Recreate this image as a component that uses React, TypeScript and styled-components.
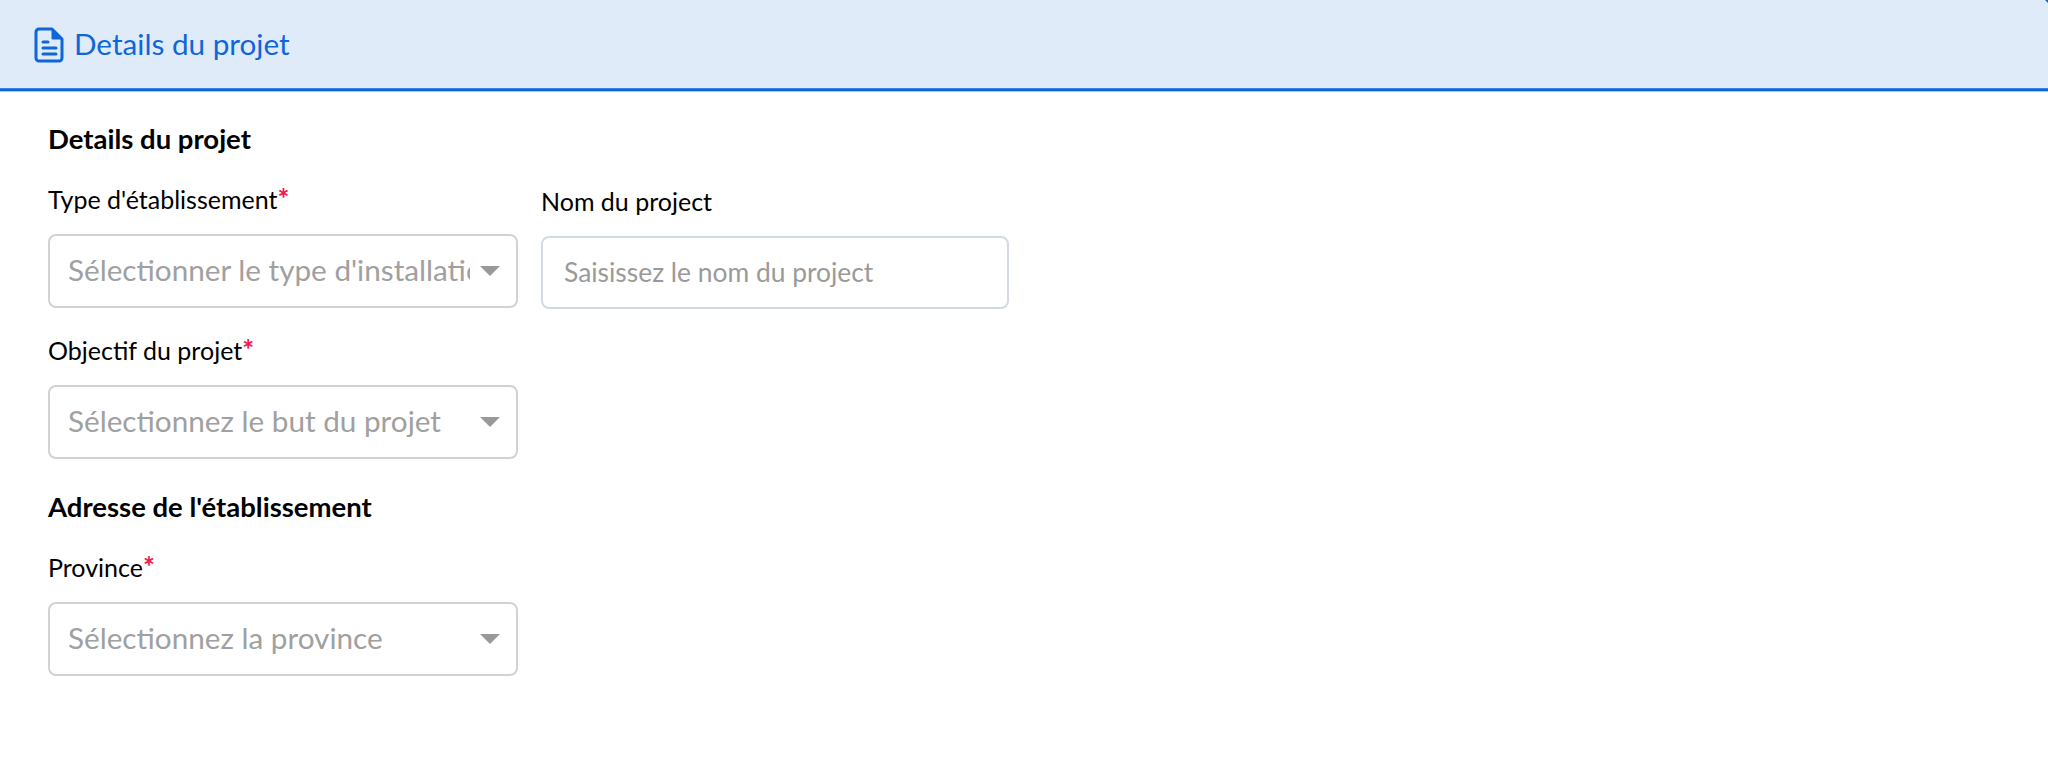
import React from "react";
import styled, { createGlobalStyle } from "styled-components";

const GlobalStyle = createGlobalStyle`
  html, body {
    margin: 0;
    padding: 0;
    background: #ffffff;
    font-family: "Lato", "Noto Sans", sans-serif;
    color: #000000;
  }
`;

const Page = styled.div`
  width: 2048px;
  height: 759px;
  overflow: hidden;
`;

const Header = styled.header`
  position: relative;
  display: flex;
  align-items: center;
  gap: 10px;
  height: 89px;
  padding-left: 34px;
  background: #dfebf8;
  border-bottom: 2px solid #0f66d8;
  box-shadow: inset 0 -1px 0 #3a85e4, 0 1px 0 #a9c9f0;
  color: #0f66d8;
`;

const HeaderTitle = styled.h1`
  margin: 0 0 3px;
  font-size: 29.7px;
  font-weight: 400;
`;

const Corner = styled.span`
  position: absolute;
  top: 0;
  right: 0;
  width: 0;
  height: 0;
  border-top: 3px solid #0f66d8;
  border-left: 3px solid transparent;
`;

const Body = styled.main`
  display: flex;
  flex-direction: column;
  align-items: flex-start;
  padding: 33px 48px 0;
`;

const SectionTitle = styled.h2<{ $top?: number }>`
  margin: ${(p) => p.$top ?? 0}px 0 0;
  font-size: 27.5px;
  line-height: 30px;
  font-weight: 700;
`;

const Row = styled.div<{ $top: number }>`
  display: flex;
  gap: 23px;
  margin-top: ${(p) => p.$top}px;
`;

const Field = styled.div<{ $offset?: number }>`
  display: flex;
  flex-direction: column;
  gap: 21px;
  width: ${(p) => (p.$offset ? 468 : 470)}px;
  padding-top: ${(p) => p.$offset ?? 0}px;
`;

const Label = styled.label`
  font-size: 25px;
  line-height: 28px;
`;

const Required = styled.span`
  color: #f5154f;
  font-size: 28px;
  line-height: 20px;
  font-weight: 700;
`;

const Select = styled.div`
  display: flex;
  align-items: center;
  justify-content: space-between;
  box-sizing: border-box;
  height: 74px;
  padding: 0 16px 0 18px;
  border: 2px solid #d2d2d2;
  border-radius: 8px;
  background: #ffffff;
`;

const SelectText = styled.span`
  width: 402px;
  overflow: hidden;
  white-space: nowrap;
  font-size: 29.7px;
  line-height: 36px;
  margin-top: -2px;
  color: #a0a0a0;
`;

const Caret = styled.span`
  width: 0;
  height: 0;
  border-left: 10px solid transparent;
  border-right: 10px solid transparent;
  border-top: 10px solid #999999;
`;

const Input = styled.div`
  display: flex;
  align-items: center;
  box-sizing: border-box;
  height: 73px;
  padding: 0 21px 2px;
  border: 2px solid #d3dae3;
  border-radius: 8px;
  font-size: 26.4px;
  color: #9a9a9a;
`;

const DocIcon = () => (
  <svg width="30" height="36" viewBox="0 0 30 36" fill="none" stroke="#0f66d8" strokeWidth="3" strokeLinejoin="round" strokeLinecap="round">
    <path d="M5 2h13l10 10v19a3 3 0 0 1-3 3H5a3 3 0 0 1-3-3V5a3 3 0 0 1 3-3z" />
    <path d="M18 3v9h9" fill="#0f66d8" strokeWidth="1" />
    <path d="M9 15h5M9 21h13M9 27h13" />
  </svg>
);

const App = () => {
  return (
    <Page>
      <GlobalStyle />
      <Header>
        <DocIcon />
        <HeaderTitle>Details du projet</HeaderTitle>
        <Corner />
      </Header>
      <Body>
        <SectionTitle>Details du projet</SectionTitle>
        <Row $top={31}>
          <Field>
            <Label>
              Type d'établissement<Required>*</Required>
            </Label>
            <Select>
              <SelectText>Sélectionner le type d'installation</SelectText>
              <Caret />
            </Select>
          </Field>
          <Field $offset={2}>
            <Label>Nom du project</Label>
            <Input>Saisissez le nom du project</Input>
          </Field>
        </Row>
        <Row $top={27}>
          <Field>
            <Label>
              Objectif du projet<Required>*</Required>
            </Label>
            <Select>
              <SelectText>Sélectionnez le but du projet</SelectText>
              <Caret />
            </Select>
          </Field>
        </Row>
        <SectionTitle $top={33}>Adresse de l'établissement</SectionTitle>
        <Row $top={31}>
          <Field>
            <Label>
              Province<Required>*</Required>
            </Label>
            <Select>
              <SelectText>Sélectionnez la province</SelectText>
              <Caret />
            </Select>
          </Field>
        </Row>
      </Body>
    </Page>
  );
};

export default App;
